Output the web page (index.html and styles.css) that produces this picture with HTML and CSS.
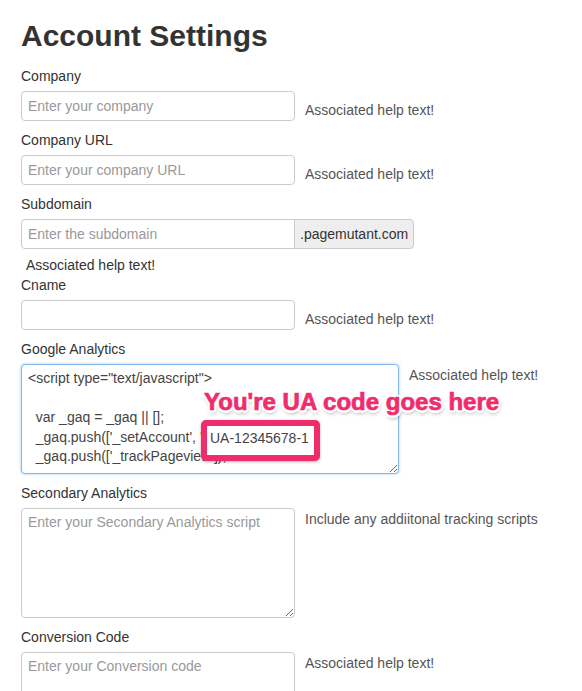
FILE: index.html
```html
<!DOCTYPE html>
<html>
<head>
<meta charset="utf-8">
<title>Account Settings</title>
<link rel="stylesheet" href="styles.css">
</head>
<body>
<div class="page">
  <h1 class="title">Account Settings</h1>

  <div class="group">
    <label class="label">Company</label>
    <div class="row">
      <input class="input" type="text" placeholder="Enter your company">
      <span class="help">Associated help text!</span>
    </div>
  </div>

  <div class="group">
    <label class="label">Company URL</label>
    <div class="row">
      <input class="input" type="text" placeholder="Enter your company URL">
      <span class="help">Associated help text!</span>
    </div>
  </div>

  <div class="group group-sub">
    <label class="label">Subdomain</label>
    <div class="input-group">
      <input class="input input-left" type="text" placeholder="Enter the subdomain">
      <span class="addon">.pagemutant.com</span>
    </div>
    <div class="help-below">Associated help text!</div>
  </div>

  <div class="group">
    <label class="label">Cname</label>
    <div class="row">
      <input class="input" type="text">
      <span class="help">Associated help text!</span>
    </div>
  </div>

  <div class="group">
    <label class="label">Google Analytics</label>
    <div class="row row-annot">
      <textarea class="textarea textarea-wide textarea-focus">&lt;script type="text/javascript"&gt;

  var _gaq = _gaq || [];
  _gaq.push(['_setAccount', 'UA-12345678-1']);
  _gaq.push(['_trackPageview']);
</textarea>
      <span class="help help-ta">Associated help text!</span>
      <div class="annot-text">You're UA code goes here</div>
      <div class="annot-box">UA-12345678-1</div>
    </div>
  </div>

  <div class="group">
    <label class="label">Secondary Analytics</label>
    <div class="row">
      <textarea class="textarea" placeholder="Enter your Secondary Analytics script"></textarea>
      <span class="help help-ta">Include any addiitonal tracking scripts</span>
    </div>
  </div>

  <div class="group">
    <label class="label">Conversion Code</label>
    <div class="row">
      <textarea class="textarea" placeholder="Enter your Conversion code"></textarea>
      <span class="help help-ta">Associated help text!</span>
    </div>
  </div>
</div>
</body>
</html>
```

FILE: styles.css
```css
html {
  overflow: hidden;
}
body {
  margin: 0;
  background: #fff;
  font-family: "Liberation Sans", Arial, sans-serif;
  font-size: 14px;
  color: #333;
}
.page {
  padding: 0 21px;
}
.title {
  margin: 18px 0 12px;
  font-size: 30px;
  line-height: 36px;
  font-weight: bold;
  color: #333;
}
.group {
  margin-bottom: 9px;
}
.group-sub {
  margin-bottom: 0;
}
.label {
  display: block;
  line-height: 20px;
  margin-bottom: 5px;
  color: #333;
}
.row {
  display: flex;
  align-items: flex-start;
}
.row-annot {
  position: relative;
}
.input {
  box-sizing: border-box;
  width: 274px;
  height: 30px;
  margin: 0;
  padding: 4px 6px;
  border: 1px solid #ccc;
  border-radius: 4px;
  font-family: "Liberation Sans", Arial, sans-serif;
  font-size: 14px;
  color: #555;
  background: #fff;
  outline: none;
}
.input::placeholder,
.textarea::placeholder {
  color: #999;
}
.help {
  margin-left: 10px;
  margin-top: 9px;
  line-height: 20px;
  color: #555;
  white-space: nowrap;
}
.help-ta {
  margin-top: 1px;
}
.input-group {
  display: flex;
}
.input-left {
  border-radius: 4px 0 0 4px;
}
.addon {
  box-sizing: border-box;
  height: 30px;
  margin-left: -1px;
  padding: 4px 5px;
  line-height: 20px;
  border: 1px solid #ccc;
  border-radius: 0 4px 4px 0;
  background: #eee;
  color: #333;
}
.help-below {
  margin-top: 6px;
  padding-left: 5px;
  line-height: 20px;
  color: #333;
}
.textarea {
  box-sizing: border-box;
  width: 274px;
  height: 110px;
  margin: 0;
  padding: 4px 6px;
  border: 1px solid #ccc;
  border-radius: 4px;
  font-family: "Liberation Sans", Arial, sans-serif;
  font-size: 14px;
  line-height: 19.5px;
  color: #444;
  background: #fff;
  outline: none;
  resize: vertical;
}
.textarea-wide {
  width: 378px;
  overflow: hidden;
}
.textarea-focus {
  border-color: #83b9ea;
  box-shadow: 0 0 3px rgba(82, 168, 236, 0.55);
}
.annot-text {
  position: absolute;
  left: 183px;
  top: 24px;
  font-size: 24px;
  line-height: 28px;
  font-weight: bold;
  color: #f02c6b;
  -webkit-text-stroke: 0.7px #f02c6b;
  white-space: nowrap;
  text-shadow:
    2.5px 0 0 #fff, -2.5px 0 0 #fff, 0 2.5px 0 #fff, 0 -2.5px 0 #fff,
    1.8px 1.8px 0 #fff, -1.8px 1.8px 0 #fff, 1.8px -1.8px 0 #fff, -1.8px -1.8px 0 #fff,
    1px 3px 4px rgba(0, 0, 0, 0.45);
}
.annot-box {
  position: absolute;
  left: 180px;
  top: 56px;
  box-sizing: border-box;
  width: 119px;
  height: 41px;
  padding: 3px 0 0 3px;
  border: 6px solid #f02c6b;
  border-radius: 5px;
  background: #fff;
  font-size: 14px;
  line-height: 19.5px;
  color: #444;
  white-space: nowrap;
  overflow: hidden;
  box-shadow: 0 1px 3px rgba(0, 0, 0, 0.3);
}
```
